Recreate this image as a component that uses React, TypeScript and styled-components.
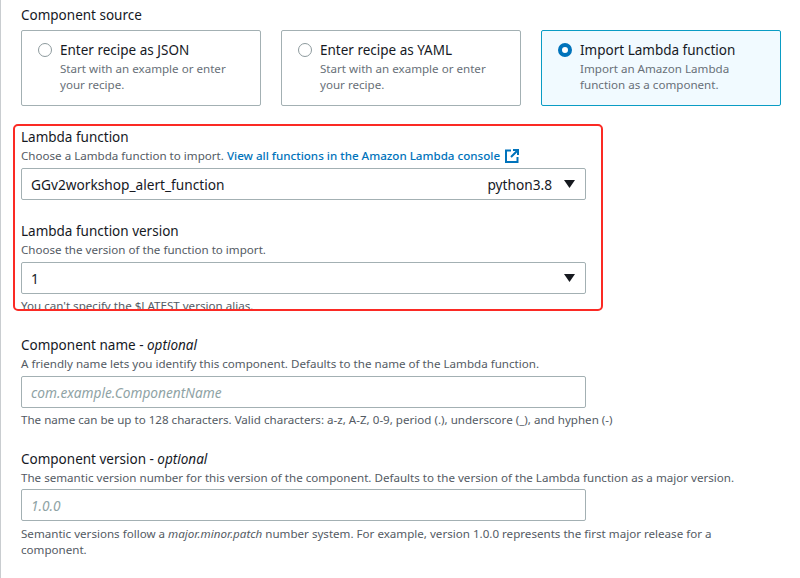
import React from "react";
import styled, { createGlobalStyle } from "styled-components";

const GlobalStyle = createGlobalStyle`
  html, body {
    margin: 0;
    padding: 0;
    background: #fff;
  }
  body {
    font-family: "Noto Sans", "Open Sans", sans-serif;
    color: #16191f;
  }
`;

const Page = styled.div`
  width: 800px;
  height: 578px;
  box-sizing: border-box;
  overflow: hidden;
  border-left: 1px solid #c9cdd0;
  padding: 6px 0 0 20px;
`;

const Label = styled.div`
  font-size: 13.5px;
  line-height: 19px;
  margin-bottom: 1px;
  color: #16191f;

  em {
    font-style: italic;
  }
`;

const Hint = styled.div`
  font-size: 11.6px;
  line-height: 16px;
  color: #545b64;

  em {
    font-style: italic;
  }
`;

const Cards = styled.div`
  display: flex;
  gap: 20px;
  margin-top: 5px;
`;

const Card = styled.div<{ $selected?: boolean }>`
  width: 240px;
  height: 76px;
  box-sizing: border-box;
  display: flex;
  gap: 8px;
  padding: 10px 0 0 16px;
  border: 1px solid ${(p) => (p.$selected ? "#0a9cc4" : "#a3b0b3")};
  border-radius: 2px;
  background: ${(p) => (p.$selected ? "#f1faff" : "#fff")};
`;

const Radio = styled.span<{ $selected?: boolean }>`
  flex: none;
  width: 14px;
  height: 14px;
  margin-top: 2px;
  box-sizing: border-box;
  border-radius: 50%;
  border: ${(p) => (p.$selected ? "4px solid #0073bb" : "1px solid #8d9a9d")};
  background: #fff;
`;

const CardTitle = styled.div`
  font-size: 13.5px;
  line-height: 18px;
  color: #16191f;
`;

const CardText = styled.div`
  font-size: 11.6px;
  line-height: 16px;
  margin-top: 2px;
  color: #687078;
  width: 180px;
`;

const Highlight = styled.div`
  width: 590px;
  height: 187px;
  box-sizing: border-box;
  margin: 18px 0 0 -8px;
  padding: 2px 0 0 6px;
  border: 2px solid #fb2a24;
  border-radius: 5px;
  overflow: hidden;
`;

const Link = styled.a`
  color: #0073bb;
  font-weight: 500;
  margin-left: 3px;
`;

const HintRow = styled(Hint)`
  display: flex;
  align-items: center;
`;

const ExternalIcon = styled.svg`
  margin-left: 5px;
  width: 14px;
  height: 14px;
`;

const Select = styled.div`
  width: 565px;
  height: 32px;
  box-sizing: border-box;
  margin-top: 4px;
  display: flex;
  align-items: center;
  padding: 0 8px 0 9px;
  border: 1px solid #a3b0b3;
  border-radius: 2px;
  background: #fff;
  font-size: 13.7px;
  color: #16191f;
`;

const SelectValue = styled.span`
  flex: 1;
`;

const SelectTag = styled.span`
  margin-right: 12px;
  color: #16191f;
`;

const Caret = styled.svg`
  width: 11px;
  height: 8px;
  margin-right: 2px;
`;

const Field = styled.div<{ $top: number }>`
  margin-top: ${(p) => p.$top}px;
`;

const ClippedHint = styled(Hint)`
  margin-top: 4px;
`;

const Input = styled.div<{ $top: number; $bottom: number }>`
  width: 565px;
  height: 32px;
  box-sizing: border-box;
  margin: ${(p) => p.$top}px 0 ${(p) => p.$bottom}px;
  display: flex;
  align-items: center;
  padding: 0 9px;
  border: 1px solid #a3b0b3;
  border-radius: 2px;
  font-size: 13.7px;
  font-style: italic;
  color: #8fa3a5;
`;

const Wrapped = styled(Hint)`
  width: 730px;
`;

const arrow = (
  <Caret viewBox="0 0 11 8">
    <path d="M0 0h11L5.5 8z" fill="#16191f" />
  </Caret>
);

export default function App() {
  return (
    <Page>
      <GlobalStyle />
      <Label>Component source</Label>
      <Cards>
        <Card>
          <Radio />
          <div>
            <CardTitle>Enter recipe as JSON</CardTitle>
            <CardText>Start with an example or enter your recipe.</CardText>
          </div>
        </Card>
        <Card>
          <Radio />
          <div>
            <CardTitle>Enter recipe as YAML</CardTitle>
            <CardText>Start with an example or enter your recipe.</CardText>
          </div>
        </Card>
        <Card $selected>
          <Radio $selected />
          <div>
            <CardTitle>Import Lambda function</CardTitle>
            <CardText>Import an Amazon Lambda function as a component.</CardText>
          </div>
        </Card>
      </Cards>

      <Highlight>
        <Label>Lambda function</Label>
        <HintRow>
          Choose a Lambda function to import.
          <Link>View all functions in the Amazon Lambda console</Link>
          <ExternalIcon viewBox="0 0 14 14" fill="none" stroke="#0073bb" strokeWidth="2">
            <path d="M6 1.5H1v11.5h11.5V8" />
            <path d="M8 1h5v5M13 1L6 8" />
          </ExternalIcon>
        </HintRow>
        <Select>
          <SelectValue>GGv2workshop_alert_function</SelectValue>
          <SelectTag>python3.8</SelectTag>
          {arrow}
        </Select>
        <Field $top={22}>
          <Label>Lambda function version</Label>
          <Hint>Choose the version of the function to import.</Hint>
          <Select>
            <SelectValue>1</SelectValue>
            {arrow}
          </Select>
          <ClippedHint>You can't specify the $LATEST version alias.</ClippedHint>
        </Field>
      </Highlight>

      <Field $top={25}>
        <Label>
          Component name - <em>optional</em>
        </Label>
        <Hint>A friendly name lets you identify this component. Defaults to the name of the Lambda function.</Hint>
        <Input $top={4} $bottom={4}>com.example.ComponentName</Input>
        <Hint>The name can be up to 128 characters. Valid characters: a-z, A-Z, 0-9, period (.), underscore (_), and hyphen (-)</Hint>
      </Field>

      <Field $top={22}>
        <Label>
          Component version - <em>optional</em>
        </Label>
        <Hint>The semantic version number for this version of the component. Defaults to the version of the Lambda function as a major version.</Hint>
        <Input $top={3} $bottom={5}>1.0.0</Input>
        <Wrapped>
          Semantic versions follow a <em>major.minor.patch</em> number system. For example, version 1.0.0 represents the first major release for a component.
        </Wrapped>
      </Field>
    </Page>
  );
}
